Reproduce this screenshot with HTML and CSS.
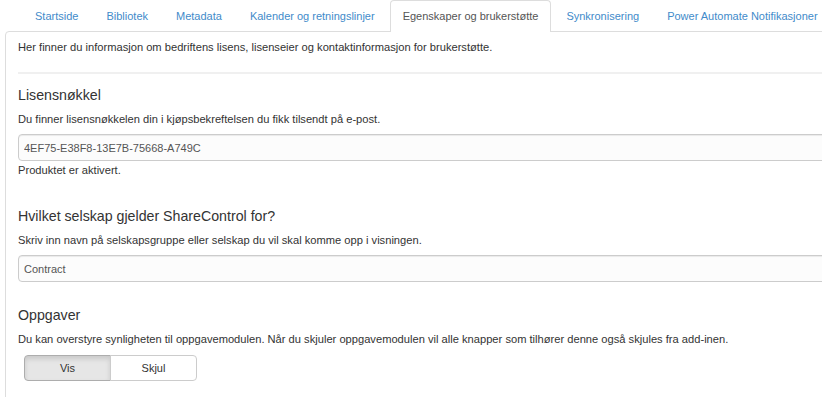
FILE: index.html
```html
<!DOCTYPE html>
<html lang="no">
<head>
    <meta charset="UTF-8">
    <meta name="viewport" content="width=device-width, initial-scale=1.0">
    <title>Innstillinger</title>
    <link rel="stylesheet" href="styles.css">
</head>
<body>
    <div id="settings-container">
        <ul class="nav-tabs">
            <li><a href="#">Startside</a></li>
            <li><a href="#">Bibliotek</a></li>
            <li><a href="#">Metadata</a></li>
            <li><a href="#">Kalender og retningslinjer</a></li>
            <li class="active"><a href="#">Egenskaper og brukerstøtte</a></li>
            <li><a href="#">Synkronisering</a></li>
            <li><a href="#">Power Automate Notifikasjoner</a></li>
        </ul>
        <div class="tab-panel">
            <p class="intro">Her finner du informasjon om bedriftens lisens, lisenseier og kontaktinformasjon for brukerstøtte.</p>
            <hr>

            <div class="section">
                <h4>Lisensnøkkel</h4>
                <p class="help">Du finner lisensnøkkelen din i kjøpsbekreftelsen du fikk tilsendt på e-post.</p>
                <input type="text" class="field" value="4EF75-E38F8-13E7B-75668-A749C">
                <p class="status">Produktet er aktivert.</p>
            </div>

            <div class="section">
                <h4>Hvilket selskap gjelder ShareControl for?</h4>
                <p class="help">Skriv inn navn på selskapsgruppe eller selskap du vil skal komme opp i visningen.</p>
                <input type="text" class="field" value="Contract">
            </div>

            <div class="section">
                <h4>Oppgaver</h4>
                <p class="help">Du kan overstyre synligheten til oppgavemodulen. Når du skjuler oppgavemodulen vil alle knapper som tilhører denne også skjules fra add-inen.</p>
                <div class="btn-group">
                    <button class="btn active">Vis</button>
                    <button class="btn">Skjul</button>
                </div>
            </div>
        </div>
    </div>
</body>
</html>
```

FILE: styles.css
```css
body {
    font-family: "Liberation Sans", Arial, sans-serif;
    font-size: 11.15px;
    line-height: 16px;
    color: #333;
    background-color: #fff;
    margin: 0;
    overflow: hidden;
}
#settings-container {
    width: 860px;
}
.nav-tabs {
    display: flex;
    list-style: none;
    margin: 0 0 -1px 0;
    padding: 0 0 0 22px;
    position: relative;
    z-index: 1;
    font-size: 11px;
}
.nav-tabs li {
    margin-right: 2px;
}
.nav-tabs a {
    display: block;
    height: 31px;
    line-height: 31px;
    padding: 0 12px;
    border: 1px solid transparent;
    border-bottom: none;
    box-sizing: border-box;
    color: #428bca;
    text-decoration: none;
    border-radius: 4px 4px 0 0;
}
.nav-tabs li.active a {
    color: #555;
    background-color: #fff;
    border-color: #ddd;
    height: 32px;
}
.tab-panel {
    margin-left: 5px;
    border: 1px solid #ddd;
    border-radius: 4px 0 0 0;
    padding: 7px 0 30px 12px;
}
.intro {
    margin: 0;
}
hr {
    border: none;
    border-top: 2px solid #f0f0f0;
    margin: 17px 0 12px 0;
}
.section {
    padding-bottom: 24px;
}
h4 {
    font-size: 14.2px;
    font-weight: normal;
    line-height: 18px;
    margin: 0 0 7px 0;
}
.help {
    margin: 0 0 7px 0;
}
.field {
    display: block;
    width: 100%;
    height: 27px;
    padding: 0 5px;
    box-sizing: border-box;
    font-family: inherit;
    font-size: 11px;
    color: #555;
    background-color: #fcfcfc;
    border: 1px solid #ccc;
    border-radius: 4px;
    box-shadow: inset 0 1px 1px rgba(0, 0, 0, 0.075);
}
.status {
    margin: 1px 0 5px 0;
}
.btn-group {
    display: flex;
    margin: 8px 0 0 6px;
}
.btn {
    width: 87px;
    height: 26px;
    font-family: inherit;
    font-size: 11px;
    color: #333;
    background-color: #fff;
    border: 1px solid #ccc;
    border-radius: 0 4px 4px 0;
    margin-left: -1px;
    cursor: pointer;
}
.btn:first-child {
    border-radius: 4px 0 0 4px;
    margin-left: 0;
}
.btn.active {
    background-color: #e6e6e6;
    border-color: #adadad;
    box-shadow: inset 0 3px 5px rgba(0, 0, 0, 0.125);
}
```
